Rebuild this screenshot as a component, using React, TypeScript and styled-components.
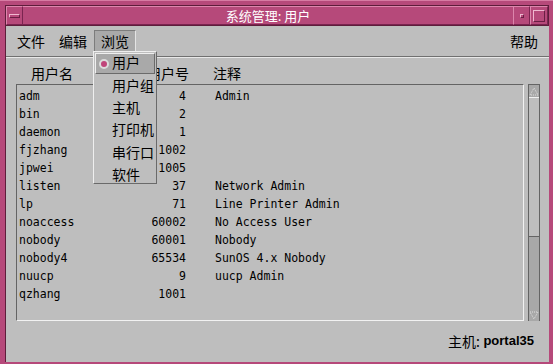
import React from "react";
import styled, { createGlobalStyle } from "styled-components";

const GlobalStyle = createGlobalStyle`
  html, body {
    margin: 0;
    padding: 0;
    background: #bebebe;
  }
`;

const CJK = `"Noto Sans CJK SC", "Noto Sans", sans-serif`;
const MONO = `"DejaVu Sans Mono", "Liberation Mono", monospace`;

const Frame = styled.div`
  width: 553px;
  height: 364px;
  box-sizing: border-box;
  background: #b6497a;
  padding: 4px 4px 2px 5px;
  display: flex;
  flex-direction: column;
  border-top: 1px solid #d77ba3;
`;

const TitleBar = styled.div`
  height: 21px;
  display: flex;
  flex-shrink: 0;
  border: 1px solid #5e1d3b;
  box-sizing: border-box;
`;

const TitleButton = styled.div<{ $w: number }>`
  width: ${(p) => p.$w}px;
  box-sizing: border-box;
  border-top: 1px solid #dc86ac;
  border-left: 1px solid #dc86ac;
  border-right: 1px solid #7a2450;
  border-bottom: 1px solid #7a2450;
  display: flex;
  align-items: center;
  justify-content: center;
`;

const TitleText = styled.div`
  flex: 1;
  color: #ffffff;
  font-family: ${CJK};
  font-size: 13px;
  display: flex;
  align-items: center;
  justify-content: center;
  border-top: 1px solid #dc86ac;
  border-bottom: 1px solid #7a2450;
`;

const Glyph = styled.span<{ $w: number; $h: number }>`
  width: ${(p) => p.$w}px;
  height: ${(p) => p.$h}px;
  box-sizing: border-box;
  border-top: 1px solid #f0b8d0;
  border-left: 1px solid #f0b8d0;
  border-right: 1px solid #6a1e44;
  border-bottom: 1px solid #6a1e44;
`;

const Body = styled.div`
  flex: 1;
  background: #bebebe;
  position: relative;
  display: flex;
  flex-direction: column;
  border-left: 1px solid #5e1d3b;
`;

const MenuBar = styled.div`
  height: 31px;
  box-sizing: border-box;
  display: flex;
  align-items: center;
  padding: 0 4px 0 4px;
  border-bottom: 1px solid #707070;
  box-shadow: 0 1px 0 #e8e8e8;
  font-family: ${CJK};
  font-size: 14px;
  color: #000;
`;

const MenuItem = styled.div<{ $active?: boolean }>`
  height: 22px;
  line-height: 20px;
  padding: 0 6px;
  box-sizing: border-box;
  white-space: nowrap;
  background: ${(p) => (p.$active ? "#a9a9a9" : "transparent")};
  border: 1px solid ${(p) => (p.$active ? "#7c7c7c" : "transparent")};
  border-right-color: ${(p) => (p.$active ? "#e4e4e4" : "transparent")};
  border-bottom-color: ${(p) => (p.$active ? "#e4e4e4" : "transparent")};
`;

const Spacer = styled.div`
  flex: 1;
`;

const Content = styled.div`
  flex: 1;
  display: flex;
  flex-direction: column;
  padding: 6px 9px 0 10px;
`;

const HeaderRow = styled.div`
  display: grid;
  grid-template-columns: 120px 50px 1fr;
  padding-left: 3px;
  height: 21px;
  font-family: ${CJK};
  font-size: 14px;
  line-height: 20px;
  color: #000;
  margin-right: 16px;
`;

const HeaderCell = styled.div<{ $align?: string; $indent?: number }>`
  text-align: ${(p) => p.$align || "left"};
  padding-left: ${(p) => p.$indent || 0}px;
  white-space: nowrap;
`;

const ListArea = styled.div`
  display: flex;
  gap: 4px;
  height: 237px;
`;

const ListBox = styled.div`
  flex: 1;
  box-sizing: border-box;
  border-top: 1px solid #646464;
  border-left: 1px solid #646464;
  border-right: 1px solid #f2f2f2;
  border-bottom: 1px solid #f2f2f2;
  padding: 2px 0 0 2px;
`;

const Row = styled.div`
  display: grid;
  grid-template-columns: 120px 47px 1fr;
  height: 18px;
  line-height: 18px;
  font-family: ${MONO};
  font-size: 11.5px;
  color: #000;
  white-space: pre;
`;

const Num = styled.span`
  text-align: right;
`;

const Note = styled.span`
  padding-left: 29px;
`;

const ScrollBar = styled.div`
  width: 12px;
  box-sizing: border-box;
  border-left: 1px solid #646464;
  border-right: 1px solid #646464;
  border-top: 1px solid #646464;
  display: flex;
  flex-direction: column;
  background: #a8a8a8;
`;

const Arrow = styled.div`
  height: 12px;
  flex-shrink: 0;
  background: #a8a8a8;
  display: flex;
  align-items: center;
  justify-content: center;
`;

const Thumb = styled.div<{ $h: number }>`
  height: ${(p) => p.$h}px;
  flex-shrink: 0;
  background: #bebebe;
  border-top: 1px solid #f0f0f0;
  border-bottom: 1px solid #646464;
  box-sizing: border-box;
`;

const Trough = styled.div`
  flex: 1;
`;

const Footer = styled.div`
  flex: 1;
  display: flex;
  align-items: center;
  justify-content: flex-end;
  padding-right: 6px;
  padding-bottom: 2px;
`;

const HostLabel = styled.span`
  font-family: ${CJK};
  font-size: 14px;
  color: #000;
`;

const HostName = styled.span`
  font-family: "Liberation Sans", Arial, sans-serif;
  font-weight: bold;
  font-size: 13px;
  color: #000;
`;

const Dropdown = styled.div`
  position: absolute;
  left: 87px;
  top: 25px;
  width: 64px;
  height: 133px;
  box-sizing: border-box;
  background: #bebebe;
  border-top: 1px solid #efefef;
  border-left: 1px solid #efefef;
  border-right: 1px solid #6a6a6a;
  border-bottom: 1px solid #6a6a6a;
  padding: 1px;
  font-family: ${CJK};
  font-size: 14px;
  color: #000;
`;

const DropItem = styled.div<{ $active?: boolean }>`
  height: ${(p) => (p.$active ? 21 : 22.4)}px;
  margin-bottom: ${(p) => (p.$active ? 1 : 0)}px;
  box-sizing: border-box;
  display: flex;
  align-items: center;
  padding: 0 0 3px 3px;
  gap: 3px;
  white-space: nowrap;
  background: ${(p) => (p.$active ? "#a9a9a9" : "transparent")};
  border: 1px solid ${(p) => (p.$active ? "#efefef" : "transparent")};
  border-right-color: ${(p) => (p.$active ? "#6a6a6a" : "transparent")};
  border-bottom-color: ${(p) => (p.$active ? "#6a6a6a" : "transparent")};
`;

const Radio = styled.span<{ $on?: boolean }>`
  width: 10px;
  height: 10px;
  margin-top: 3px;
  border-radius: 50%;
  box-sizing: border-box;
  border: 2px solid ${(p) => (p.$on ? "#dcdcdc" : "transparent")};
  background: ${(p) => (p.$on ? "#c0457a" : "transparent")};
  flex-shrink: 0;
`;

const users: [string, string, string][] = [
  ["adm", "4", "Admin"],
  ["bin", "2", ""],
  ["daemon", "1", ""],
  ["fjzhang", "1002", ""],
  ["jpwei", "1005", ""],
  ["listen", "37", "Network Admin"],
  ["lp", "71", "Line Printer Admin"],
  ["noaccess", "60002", "No Access User"],
  ["nobody", "60001", "Nobody"],
  ["nobody4", "65534", "SunOS 4.x Nobody"],
  ["nuucp", "9", "uucp Admin"],
  ["qzhang", "1001", ""],
];

const browseItems = ["用户", "用户组", "主机", "打印机", "串行口", "软件"];

const TriUp = () => (
  <svg width="10" height="9" viewBox="0 0 10 9">
    <path d="M5 1 L9 8 L1 8 Z" fill="none" stroke="#e0e0e0" strokeWidth="1" strokeDasharray="1 1" />
  </svg>
);

const TriDown = () => (
  <svg width="10" height="9" viewBox="0 0 10 9">
    <path d="M1 1 L9 1 L5 8 Z" fill="none" stroke="#e0e0e0" strokeWidth="1" strokeDasharray="1 1" />
  </svg>
);

const App: React.FC = () => {
  return (
    <>
      <GlobalStyle />
      <Frame>
        <TitleBar>
          <TitleButton $w={17}>
            <Glyph $w={11} $h={4} />
          </TitleButton>
          <TitleText>系统管理: 用户</TitleText>
          <TitleButton $w={17}>
            <Glyph $w={4} $h={4} />
          </TitleButton>
          <TitleButton $w={18}>
            <Glyph $w={12} $h={12} />
          </TitleButton>
        </TitleBar>
        <Body>
          <MenuBar>
            <MenuItem>文件</MenuItem>
            <MenuItem>编辑</MenuItem>
            <MenuItem $active>浏览</MenuItem>
            <Spacer />
            <MenuItem>帮助</MenuItem>
          </MenuBar>
          <Content>
            <HeaderRow>
              <HeaderCell $indent={12}>用户名</HeaderCell>
              <HeaderCell $align="right">用户号</HeaderCell>
              <HeaderCell $indent={24}>注释</HeaderCell>
            </HeaderRow>
            <ListArea>
              <ListBox>
                {users.map(([name, id, note]) => (
                  <Row key={name}>
                    <span>{name}</span>
                    <Num>{id}</Num>
                    <Note>{note}</Note>
                  </Row>
                ))}
              </ListBox>
              <ScrollBar>
                <Arrow>
                  <TriUp />
                </Arrow>
                <Thumb $h={140} />
                <Trough />
                <Arrow>
                  <TriDown />
                </Arrow>
              </ScrollBar>
            </ListArea>
            <Footer>
              <HostLabel>主机:</HostLabel>
              <HostName>&nbsp;portal35</HostName>
            </Footer>
          </Content>
          <Dropdown>
            {browseItems.map((item, i) => (
              <DropItem key={item} $active={i === 0}>
                <Radio $on={i === 0} />
                {item}
              </DropItem>
            ))}
          </Dropdown>
        </Body>
      </Frame>
    </>
  );
};

export default App;
